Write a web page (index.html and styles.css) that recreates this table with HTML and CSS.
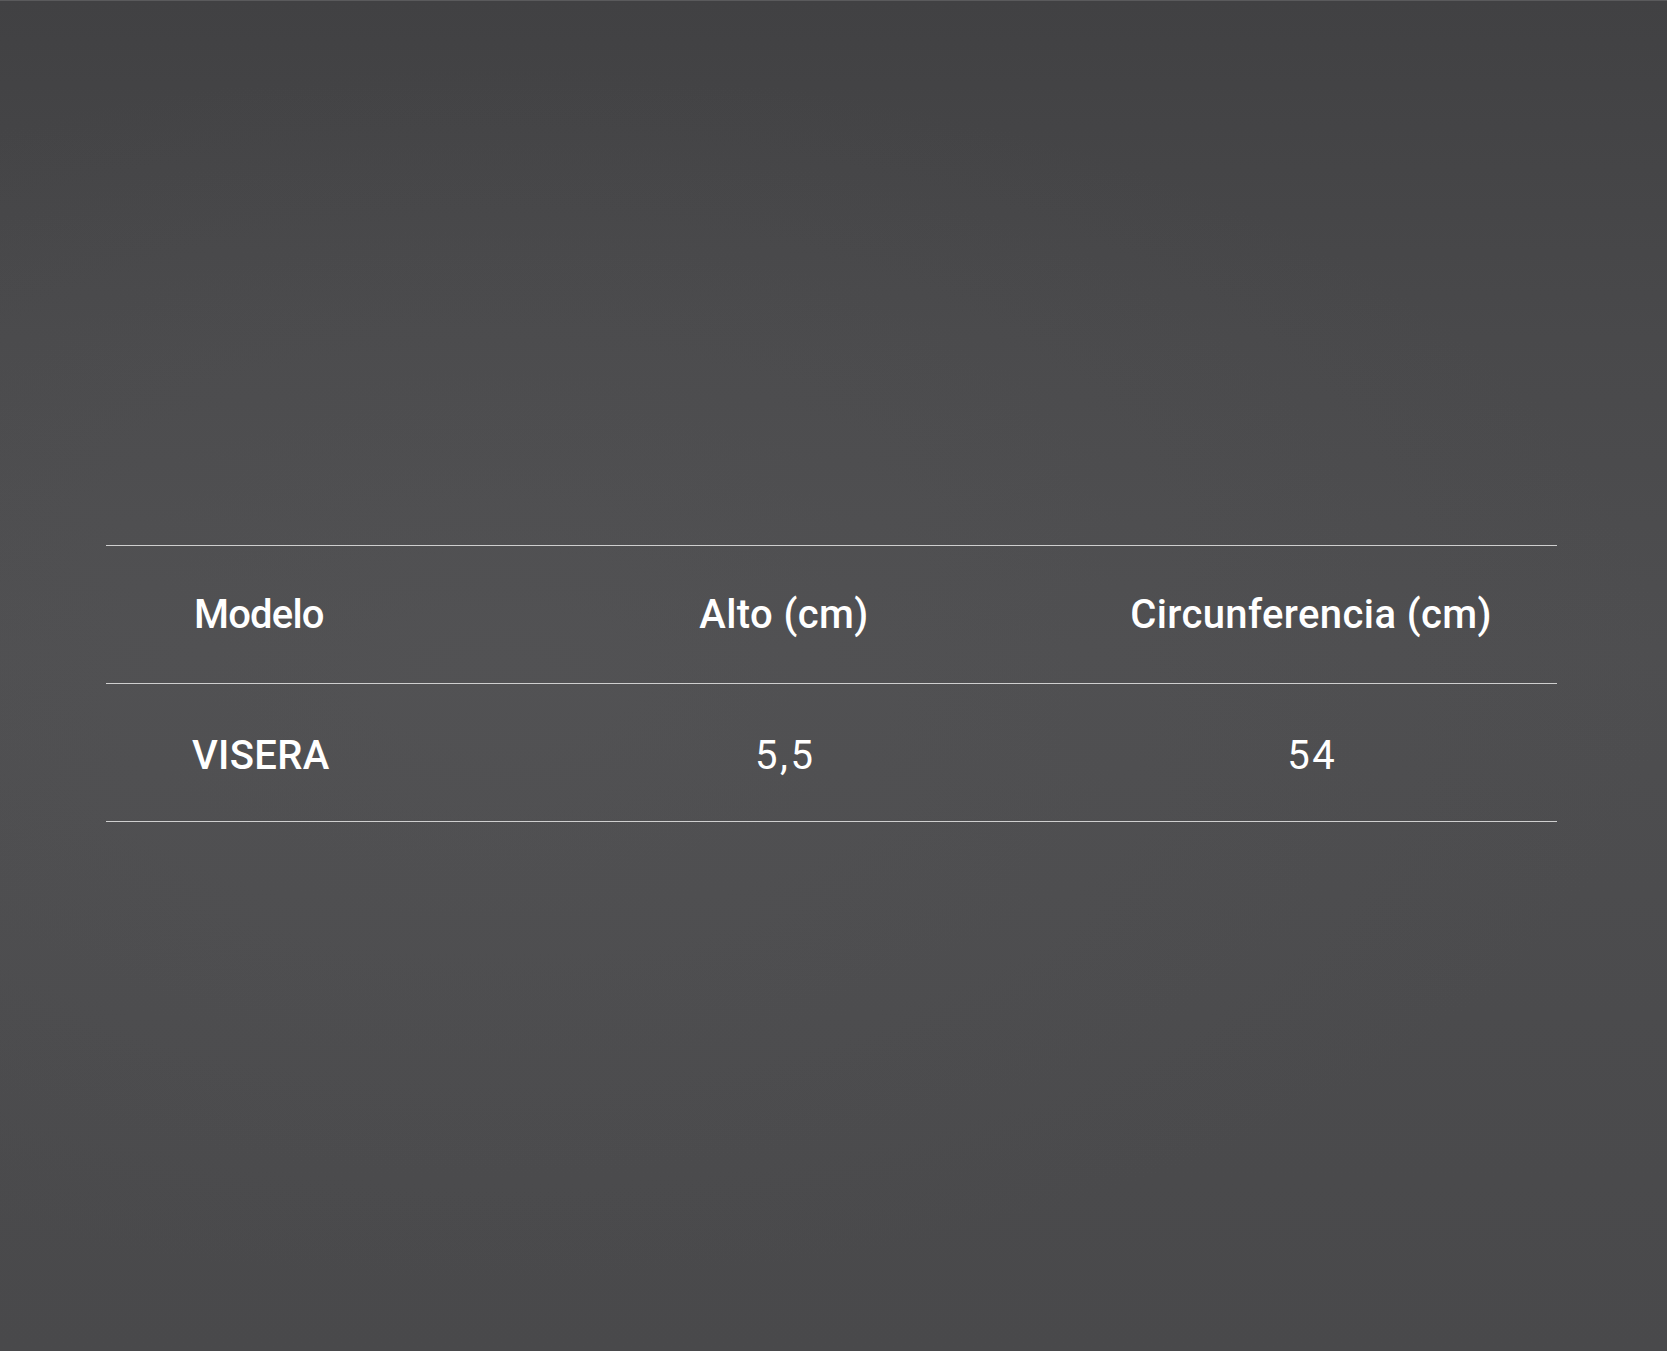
FILE: index.html
```html
<!DOCTYPE html>
<html lang="es">
<head>
<meta charset="utf-8">
<title>Tabla de medidas</title>
<link rel="stylesheet" href="styles.css">
</head>
<body>
<main class="page">
  <div class="size-table">
    <div class="row head">
      <div class="cell first">Modelo</div>
      <div class="cell">Alto (cm)</div>
      <div class="cell">Circunferencia (cm)</div>
    </div>
    <div class="row body">
      <div class="cell first strong">VISERA</div>
      <div class="cell num">5,5</div>
      <div class="cell num">54</div>
    </div>
  </div>
</main>
</body>
</html>
```
FILE: styles.css
```css
html, body {
  margin: 0;
  padding: 0;
}
body {
  width: 1667px;
  height: 1351px;
  overflow: hidden;
  border-top: 1px solid #5a5a5c;
  box-sizing: border-box;
  background:
    radial-gradient(ellipse 70% 45% at 30% 50%, rgba(86,86,88,0.5), rgba(86,86,88,0) 100%),
    linear-gradient(180deg, #414143 0%, #49494b 25%, #4e4e50 48%, #4b4b4d 75%, #49494b 100%);
  font-family: Roboto, "Liberation Sans", sans-serif;
  color: #ffffff;
}
.page {
  padding-top: 544px;
  padding-left: 106px;
}
.size-table {
  width: 1451px;
  border-top: 1px solid #cfcfcf;
}
.row {
  display: grid;
  grid-template-columns: 397px 562px 492px;
  height: 137px;
  align-items: center;
  border-bottom: 1px solid #cfcfcf;
}
.cell {
  text-align: center;
  font-size: 40px;
  line-height: 1;
}
.cell.first {
  text-align: left;
  padding-left: 88px;
}
.head .cell {
  font-weight: 500;
  letter-spacing: 0.4px;
  padding-top: 0;
}
.head .cell.first {
  letter-spacing: -0.8px;
}
.body .cell {
  font-weight: 400;
  padding-top: 7px;
}
.body .cell.strong {
  font-weight: 500;
  letter-spacing: 0.3px;
  padding-left: 86px;
}
.body .cell.num {
  letter-spacing: 2.5px;
  text-indent: 2.5px;
}
```
